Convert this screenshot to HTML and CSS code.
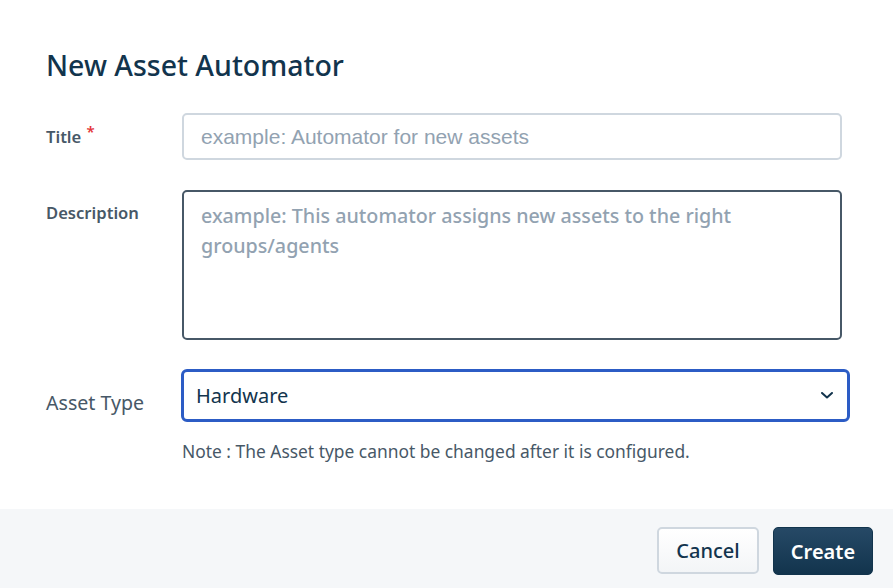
FILE: index.html
```html
<!DOCTYPE html>
<html lang="en">
<head>
<meta charset="utf-8">
<title>New Asset Automator</title>
<link rel="stylesheet" href="styles.css">
</head>
<body>
<div class="dialog">
  <div class="content">
    <h1 class="heading">New Asset Automator</h1>
    <div class="row row-title">
      <label class="label label-strong">Title <span class="req">*</span></label>
      <input class="text-input" type="text" placeholder="example: Automator for new assets">
    </div>
    <div class="row row-desc">
      <label class="label label-strong">Description</label>
      <textarea class="textarea" placeholder="example: This automator assigns new assets to the right groups/agents"></textarea>
    </div>
    <div class="row row-type">
      <label class="label label-type">Asset Type</label>
      <div class="field">
        <div class="select">
          <span class="select-value">Hardware</span>
          <svg class="chevron" width="12" height="7" viewBox="0 0 12 7"><path d="M1 1 L6 5.5 L11 1" fill="none" stroke="#12344d" stroke-width="2" stroke-linecap="round" stroke-linejoin="round"/></svg>
        </div>
        <p class="note">Note : The Asset type cannot be changed after it is configured.</p>
      </div>
    </div>
  </div>
  <div class="footer">
    <button class="btn btn-cancel" type="button">Cancel</button>
    <button class="btn btn-create" type="button">Create</button>
  </div>
</div>
</body>
</html>
```
FILE: styles.css
```css
* { box-sizing: border-box; }
html, body { margin: 0; padding: 0; background: #ffffff; }
body { font-family: "Noto Sans", "Open Sans", sans-serif; color: #12344d; }

.dialog { display: flex; flex-direction: column; height: 588px; }
.content { flex: 1; padding: 47px 43px 0 46px; }

.heading {
  margin: 0 0 30px;
  font-size: 28.5px;
  line-height: 36px;
  font-weight: 500;
  color: #12344d;
}

.row { display: grid; grid-template-columns: 136px 660px; }
.row-desc { margin-top: 30px; }
.row-type { margin-top: 29px; }

.label { color: #475867; font-size: 16.6px; line-height: 22px; }
.label-strong { font-weight: 600; }
.row-title .label { padding-top: 13px; }
.row-desc .label { padding-top: 12px; }
.label-type { font-size: 19.6px; line-height: 24px; padding-top: 22px; font-weight: 400; }
.req { color: #e43538; font-size: 15px; position: relative; top: -6px; margin-left: 1px; }

.text-input {
  width: 660px; height: 47px;
  border: 2px solid #cfd7df; border-radius: 5px;
  padding: 0 17px;
  font-family: "Liberation Sans", Arial, sans-serif; font-size: 21px;
  color: #12344d; outline: none; background: #fff;
}
.text-input::placeholder { color: #92a2b1; }

.textarea {
  display: block;
  width: 660px; height: 150px;
  border: 2px solid #475867; border-radius: 5px;
  padding: 9px 17px;
  font-family: "Noto Sans", sans-serif; font-size: 19.7px; line-height: 30px; font-weight: 500;
  color: #12344d; resize: none; outline: none;
}
.textarea::placeholder { color: #92a2b1; }

.field { margin-left: -1px; }
.select {
  width: 669px; height: 53px;
  border: 3px solid #2c5cc5; border-radius: 6px;
  display: flex; align-items: center; justify-content: space-between;
  padding: 0 14px 0 12px;
  font-size: 20px; color: #12344d;
}
.chevron { display: block; }

.note {
  margin: 18px 0 0 1px;
  font-size: 17.4px; line-height: 22px; font-weight: 400;
  color: #475867;
}

.footer {
  height: 79px;
  background: #f5f7f9;
  display: flex; justify-content: flex-end; align-items: flex-start;
  gap: 14px;
  padding: 18px 20px 0 0;
}
.btn {
  height: 47px; border-radius: 5px;
  font-family: "Noto Sans", sans-serif; font-size: 20px;
  cursor: pointer; padding: 0;
}
.btn-cancel {
  width: 102px;
  border: 2px solid #cfd7df;
  background: linear-gradient(#ffffff, #f3f5f7);
  color: #12344d; font-weight: 500;
}
.btn-create {
  width: 100px; height: 48px;
  border: 1px solid #12344d;
  background: linear-gradient(#264966, #12344d);
  color: #ffffff; font-weight: 600;
}
```
